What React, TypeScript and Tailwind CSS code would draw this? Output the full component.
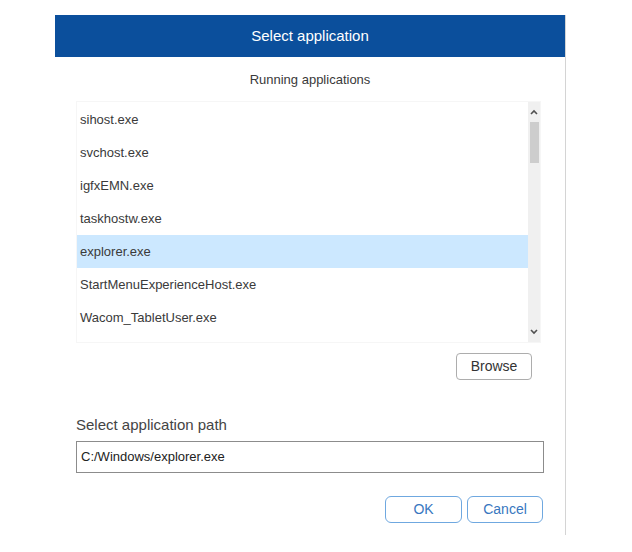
const apps = [
  'sihost.exe',
  'svchost.exe',
  'igfxEMN.exe',
  'taskhostw.exe',
  'explorer.exe',
  'StartMenuExperienceHost.exe',
  'Wacom_TabletUser.exe',
];

const Chevron = ({ up }: { up?: boolean }) => (
  <svg width="8" height="6" viewBox="0 0 8 6" className="block">
    <polyline
      points={up ? '1,5 4,2 7,5' : '1,1 4,4 7,1'}
      fill="none"
      stroke="#505050"
      strokeWidth="1.6"
    />
  </svg>
);

export default function App() {
  const selected = 'explorer.exe';

  return (
    <div className="min-h-screen bg-white font-['Liberation_Sans',Arial,sans-serif] text-[#3a3a3a]">
      <div className="h-[15px]" />
      <div className="ml-[55px] flex h-[520px] w-[511px] flex-col border-r border-[#d4d4d4]">
        <div className="flex h-[42px] items-center justify-center bg-[#0b4f9c] text-[15px] text-white">
          Select application
        </div>

        <div className="mt-[15px] text-center text-[13px] leading-[16px] text-[#3a3a3a]">
          Running applications
        </div>

        <div className="ml-[21px] mt-[13px] flex h-[242px] w-[465px] border border-[#f6f6f6]">
          <div className="flex-1 overflow-hidden pt-px">
            {apps.map((a) => (
              <div
                key={a}
                className={`flex h-[33px] items-center pl-[3px] text-[13px] ${
                  a === selected ? 'bg-[#cce8ff]' : ''
                }`}
              >
                {a}
              </div>
            ))}
          </div>
          <div className="flex w-[12px] flex-col items-center bg-[#f0f0f0]">
            <div className="flex h-[20px] items-center">
              <Chevron up />
            </div>
            <div className="h-[41px] w-[9px] bg-[#cdcdcd]" />
            <div className="flex-1" />
            <div className="flex h-[20px] items-center">
              <Chevron />
            </div>
          </div>
        </div>

        <div className="ml-[21px] mt-[10px] flex w-[465px] justify-end pr-[9px]">
          <button className="h-[27px] w-[76px] rounded-[4px] border border-[#adadad] bg-white text-[14px] text-[#333]">
            Browse
          </button>
        </div>

        <div className="ml-[21px] mt-[36px] text-[15px] leading-[18px] text-[#444]">
          Select application path
        </div>

        <div className="ml-[21px] mt-[7px] flex h-[32px] w-[468px] items-center border border-[#8c8c8c] pl-[4px] text-[13px] text-[#222]">
          C:/Windows/explorer.exe
        </div>

        <div className="ml-[330px] mt-[23px] flex gap-[5px]">
          <button className="h-[27px] w-[77px] rounded-[6px] border border-[#6fa8e0] bg-white text-[14px] text-[#3877c0]">
            OK
          </button>
          <button className="h-[27px] w-[76px] rounded-[6px] border border-[#6fa8e0] bg-white text-[14px] text-[#3877c0]">
            Cancel
          </button>
        </div>
      </div>
    </div>
  );
}
